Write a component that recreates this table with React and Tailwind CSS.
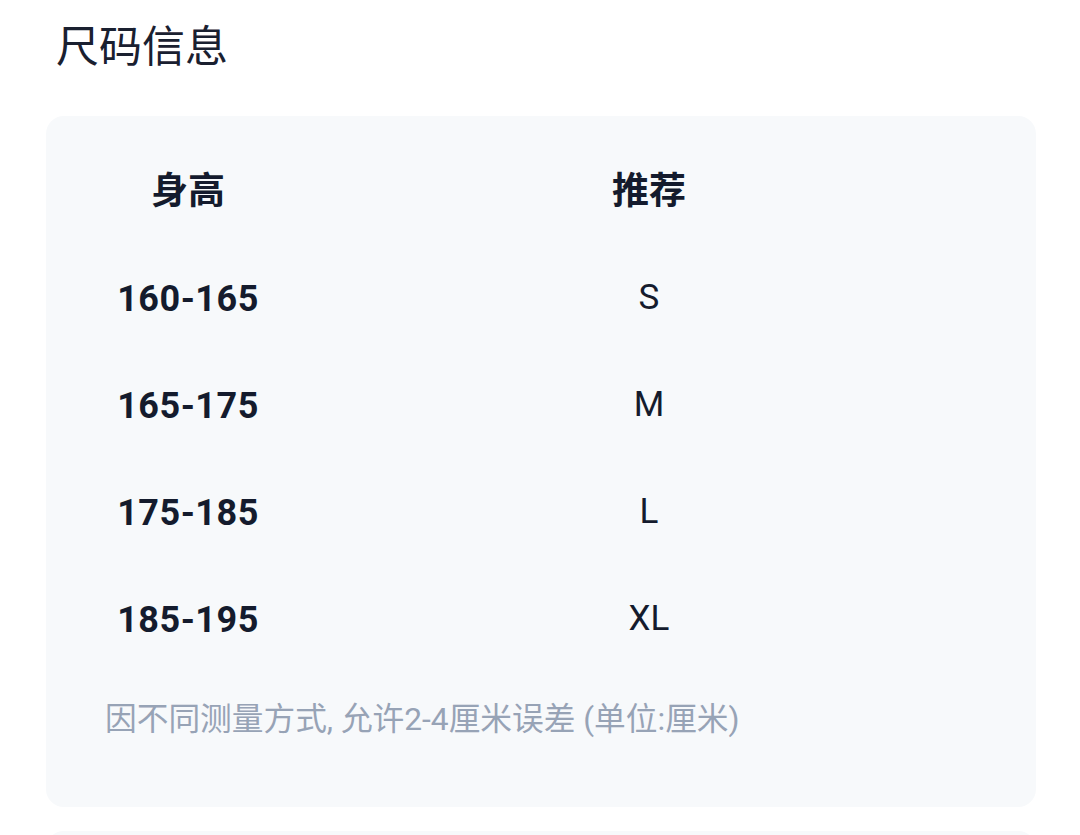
import React from 'react';

const rows = [
  { h: '160-165', s: 'S' },
  { h: '165-175', s: 'M' },
  { h: '175-185', s: 'L' },
  { h: '185-195', s: 'XL' },
];

const font = { fontFamily: 'Roboto, "Noto Sans CJK SC", sans-serif' };

export default function App() {
  return (
    <div className="w-[1080px] h-[835px] overflow-hidden bg-white" style={font}>
      <div className="pl-[46px] pr-[44px]">
        <h1 className="pt-[21px] pl-[10px] h-[116px] text-[43px] leading-[52px] font-normal text-[#1a2030]">
          尺码信息
        </h1>

        <div className="rounded-[18px] bg-[#f7f9fb] h-[691px] pt-[50px]">
          <div className="grid grid-cols-[284px_638px] text-[#141b2d]">
            <div className="h-[52px] flex items-center justify-center text-[37px] font-bold">身高</div>
            <div className="h-[52px] flex items-center justify-center text-[37px] font-bold">推荐</div>
          </div>

          <div className="mt-[27px] flex flex-col">
            {rows.map((r) => (
              <div key={r.h} className="grid grid-cols-[284px_638px] h-[107px] items-center text-[#141b2d]">
                <div className="text-center text-[36px] font-bold tracking-[0.5px]">{r.h}</div>
                <div className="text-center text-[35px] font-normal">{r.s}</div>
              </div>
            ))}
          </div>

          <p className="mt-[27px] pl-[59px] text-[31.7px] leading-[40px] text-[#97a3b6]">
            因不同测量方式, 允许2-4厘米误差 (单位:厘米)
          </p>
        </div>

        <div className="mt-[24px] h-[40px] rounded-t-[18px] bg-[#f7f9fb]" />
      </div>
    </div>
  );
}
